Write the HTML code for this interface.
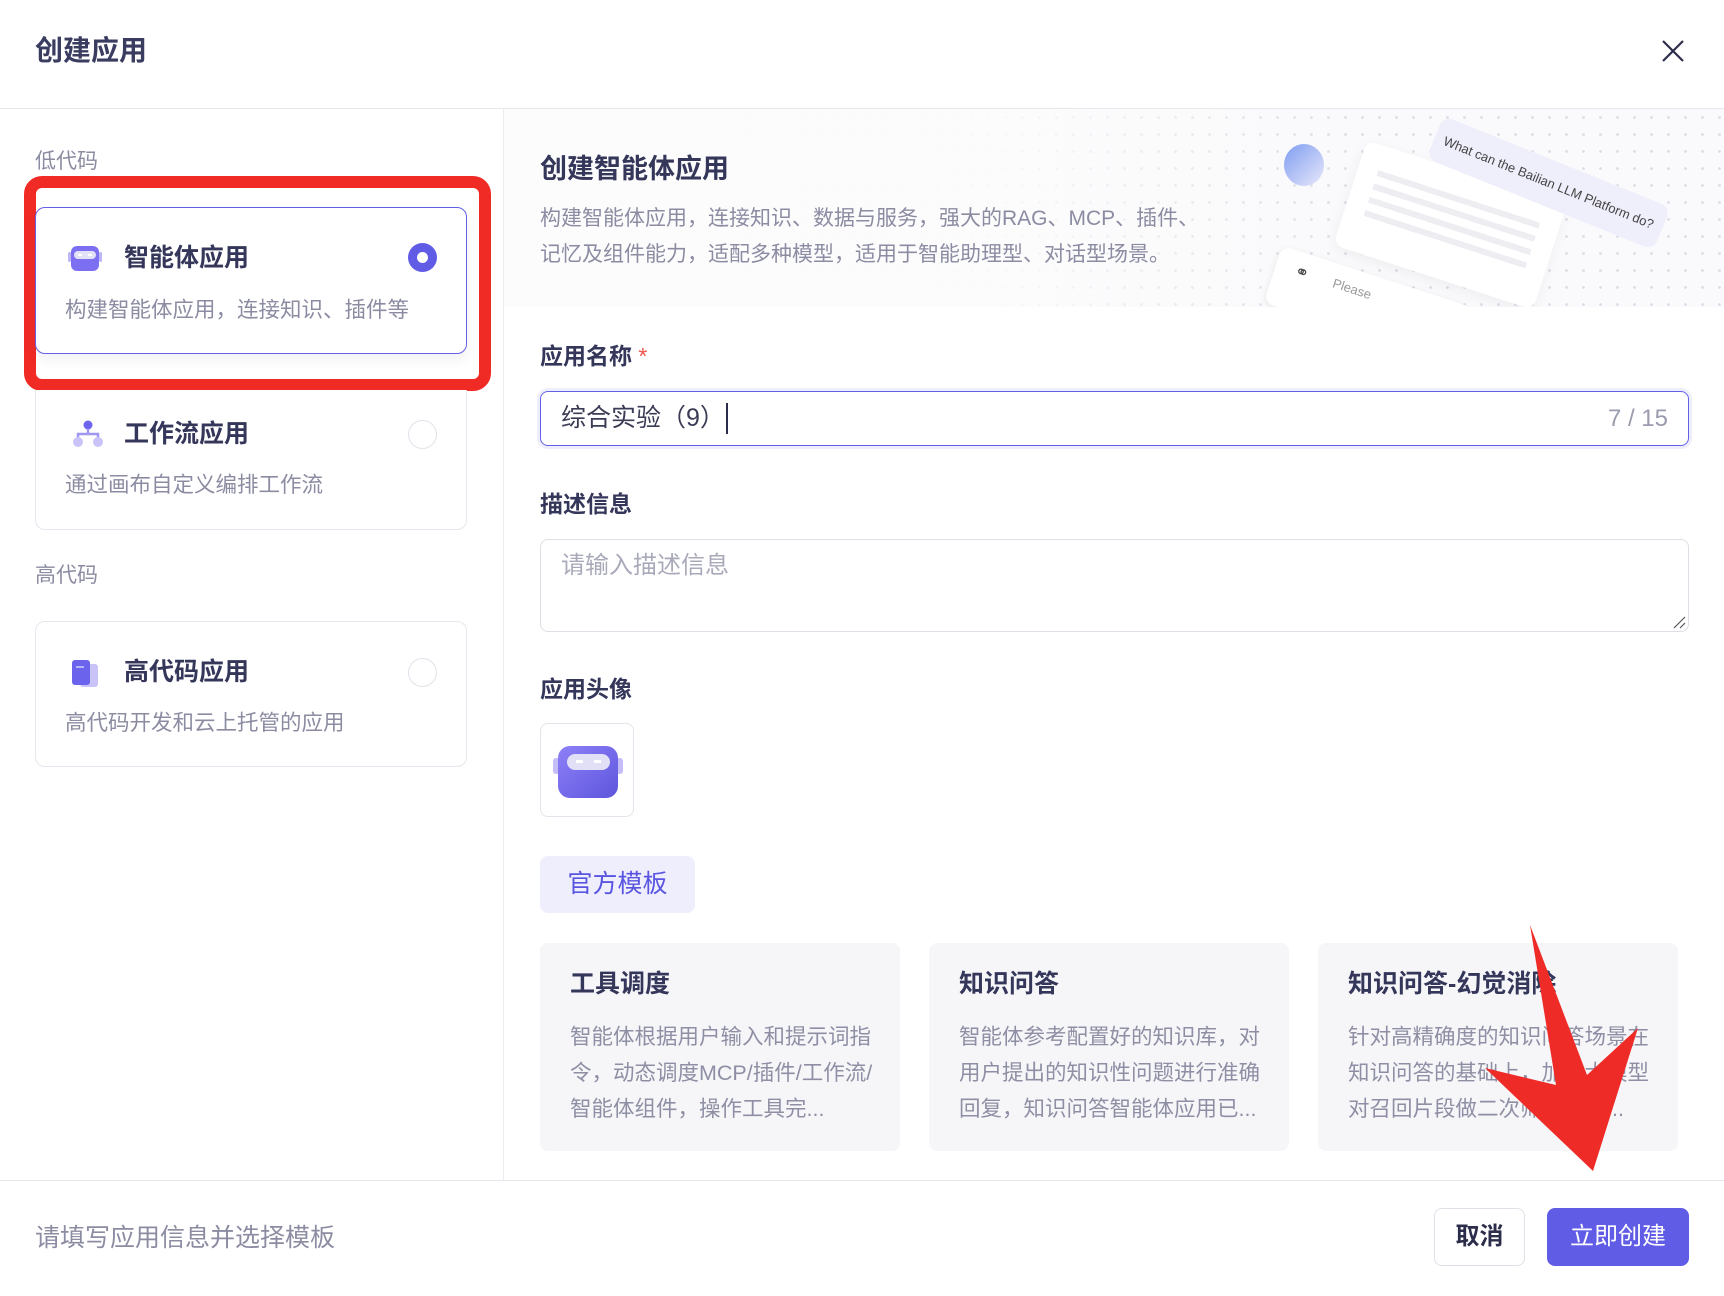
<!DOCTYPE html>
<html><head><meta charset="utf-8"><style>
*{margin:0;padding:0;box-sizing:border-box}
body{width:1724px;height:1296px;background:#fff;font-family:"Liberation Sans","Noto Sans CJK SC",sans-serif;color:#2c2d4b;position:relative;overflow:hidden}
.a{position:absolute;white-space:nowrap}
.t{line-height:1}
.card{position:absolute;border:1px solid #e6e6ee;border-radius:10px;background:#fff}
.ct{font-size:25px;font-weight:bold;color:#34365a}
.cd{font-size:21.5px;color:#8b8ca2}
.radio{position:absolute;width:29px;height:29px;border-radius:50%;border:1px solid #e2e2ea;background:#fff}
.lbl{font-size:23px;font-weight:bold;color:#34365a}
.tc{position:absolute;top:943px;width:360px;height:208px;background:#f6f6f9;border-radius:8px}
.tc .h{position:absolute;left:30px;top:29px;font-size:25px;font-weight:bold;color:#34365a}
.tc .d{position:absolute;left:30px;top:76px;font-size:21.5px;line-height:36px;color:#8e8fa4;width:306px;white-space:normal}
</style></head><body>
<div class="a t" style="left:35px;top:37px;font-size:28px;font-weight:bold;color:#3a3c60">创建应用</div>
<svg class="a" style="left:1662px;top:40px" width="22" height="22" viewBox="0 0 22 22"><path d="M1 1L21 21M21 1L1 21" stroke="#2c2d4b" stroke-width="2.2"/></svg>
<div class="a" style="left:0;top:108px;width:1724px;height:1px;background:#e6e6ec"></div>
<div class="a" style="left:503px;top:108px;width:1px;height:1072px;background:#ececf1"></div>
<div class="a t" style="left:35px;top:151px;font-size:21px;color:#8b8ca2">低代码</div>

<div class="a" style="left:24px;top:176px;width:467px;height:215px;border:12px solid #f02b26;border-radius:18px"></div>
<div class="card" style="left:35px;top:207px;width:432px;height:147px;border-color:#6460e6;box-shadow:0 6px 12px rgba(80,80,120,0.08)">
  <svg class="a" style="left:32px;top:37px" width="34" height="28" viewBox="0 0 34 28"><rect x="0" y="7" width="3" height="10" rx="1.5" fill="#bcb6f5"/><rect x="31" y="7" width="3" height="10" rx="1.5" fill="#bcb6f5"/><rect x="3" y="1" width="28" height="25" rx="6" fill="#7d6ff2"/><rect x="6" y="6" width="22" height="8" rx="4" fill="#e3e1f7"/><rect x="10" y="9" width="4" height="2" fill="#fff"/><rect x="20" y="9" width="4" height="2" fill="#fff"/></svg>
  <div class="a t ct" style="left:88px;top:38px">智能体应用</div>
  <div class="a t cd" style="left:29px;top:92px">构建智能体应用，连接知识、插件等</div>
  <div class="a" style="left:372px;top:35px;width:29px;height:29px;border-radius:50%;background:#615ce6"><div style="position:absolute;left:9px;top:9px;width:11px;height:11px;border-radius:50%;background:#fff"></div></div>
</div>
<div class="card" style="left:35px;top:390px;width:432px;height:140px;border-top:none;border-radius:0 0 10px 10px">
  <svg class="a" style="left:36px;top:30px" width="32" height="28" viewBox="0 0 32 28"><circle cx="16" cy="5" r="4.5" fill="#6f66ee"/><path d="M16 9V14M6 19V14H26V19" stroke="#9e97f3" stroke-width="2.5" fill="none"/><circle cx="6" cy="22" r="5" fill="#c8c3f8"/><circle cx="26" cy="22" r="5" fill="#c8c3f8"/></svg>
  <div class="a t ct" style="left:88px;top:32px">工作流应用</div>
  <div class="a t cd" style="left:29px;top:85px">通过画布自定义编排工作流</div>
  <div class="radio" style="left:372px;top:30px"></div>
</div>
<div class="a t" style="left:35px;top:565px;font-size:21px;color:#8b8ca2">高代码</div>
<div class="card" style="left:35px;top:621px;width:432px;height:146px">
  <svg class="a" style="left:34px;top:37px" width="30" height="30" viewBox="0 0 30 30"><rect x="10" y="5" width="18" height="23" rx="3" fill="#c8c3f8"/><rect x="2" y="1" width="18" height="25" rx="3" fill="#6c63ec"/><rect x="6" y="7" width="8" height="2" fill="#b9b4f6"/></svg>
  <div class="a t ct" style="left:88px;top:38px">高代码应用</div>
  <div class="a t cd" style="left:29px;top:91px">高代码开发和云上托管的应用</div>
  <div class="radio" style="left:372px;top:36px"></div>
</div>
<div class="a" style="left:504px;top:109px;width:1220px;height:198px;overflow:hidden">
<div class="a" style="left:0;top:0;width:1220px;height:198px;background-color:#fafafc;background-image:radial-gradient(circle,#dcdce6 1.2px,transparent 1.6px);background-size:17px 17px"></div>
<div class="a" style="left:0;top:0;width:1220px;height:198px;background:linear-gradient(90deg,#fcfcfd 0%,rgba(252,252,253,0.9) 40%,rgba(250,250,252,0) 70%)"></div>
<div class="a" style="left:780px;top:35px;width:40px;height:42px;border-radius:50%;background:linear-gradient(135deg,#7f9df0,#e8e8fb)"></div>
<div class="a" style="left:841px;top:61px;width:210px;height:110px;background:#fff;border-radius:10px;transform:rotate(18deg);box-shadow:0 4px 14px rgba(0,0,0,0.05)"><div style="margin:25px 20px;height:6px;background:#eeeef2;box-shadow:0 14px 0 #eeeef2,0 28px 0 #eeeef2,0 42px 0 #eeeef2"></div></div>
<div class="a" style="left:764px;top:166px;width:200px;height:60px;background:#fff;border-radius:10px;transform:rotate(18deg);box-shadow:0 2px 8px rgba(0,0,0,0.08)"><span style="position:absolute;left:20px;top:10px;font-size:17px;color:#444">&#9901;</span><span style="position:absolute;left:60px;top:12px;font-size:13px;color:#999">Please</span></div>
<div class="a" style="left:922px;top:51px;width:245px;height:46px;background:#efeefb;border-radius:10px;transform:rotate(22deg);font-size:13px;color:#444;line-height:46px;text-align:center">What can the Bailian LLM Platform do?</div>
</div>
<div class="a t" style="left:540px;top:156px;font-size:27px;font-weight:bold;color:#34365a">创建智能体应用</div>
<div class="a t" style="left:540px;top:208px;font-size:21px;color:#8b8ca2">构建智能体应用，连接知识、数据与服务，强大的RAG、MCP、插件、</div>
<div class="a t" style="left:540px;top:244px;font-size:21px;color:#8b8ca2">记忆及组件能力，适配多种模型，适用于智能助理型、对话型场景。</div>
<div class="a t lbl" style="left:540px;top:345px">应用名称 <span style="color:#f0524a;font-weight:normal">*</span></div>
<div class="a" style="left:540px;top:391px;width:1149px;height:55px;border:1.5px solid #6460e6;border-radius:8px;box-shadow:0 0 0 3px #eeedfc"></div>
<div class="a t" style="left:561px;top:406px;font-size:25px;color:#3a3b55">综合实验（9）</div>
<div class="a" style="left:726px;top:403px;width:2px;height:31px;background:#2c2d4b"></div>
<div class="a t" style="right:56px;top:407px;font-size:24px;color:#9a9bae">7 / 15</div>
<div class="a t lbl" style="left:540px;top:493px">描述信息</div>
<div class="a" style="left:540px;top:539px;width:1149px;height:93px;border:1px solid #dedee6;border-radius:8px"></div>
<div class="a t" style="left:561px;top:554px;font-size:24px;color:#a9aab9">请输入描述信息</div>
<svg class="a" style="left:1672px;top:615px" width="14" height="14"><path d="M2 13L13 2M8 13L13 8" stroke="#555" stroke-width="1.2"/></svg>
<div class="a t lbl" style="left:540px;top:678px">应用头像</div>
<div class="a" style="left:540px;top:723px;width:94px;height:94px;border:1px solid #e4e4ec;border-radius:8px;background:#fff">
<svg style="position:absolute;left:11px;top:20px" width="72" height="56" viewBox="0 0 72 56"><rect x="1" y="14" width="7" height="16" rx="3" fill="#c4bdf7"/><rect x="64" y="14" width="7" height="16" rx="3" fill="#c4bdf7"/><defs><linearGradient id="g" x1="0" y1="0" x2="1" y2="1"><stop offset="0" stop-color="#8e80f8"/><stop offset="1" stop-color="#5d55dc"/></linearGradient></defs><rect x="6" y="2" width="60" height="52" rx="12" fill="url(#g)"/><rect x="15" y="10" width="43" height="16" rx="8" fill="#e2e0f6"/><rect x="24" y="16" width="7" height="3" fill="#fff"/><rect x="42" y="16" width="7" height="3" fill="#fff"/></svg></div>
<div class="a t" style="left:540px;top:856px;width:155px;height:57px;background:#efeefd;border-radius:8px;font-size:25px;color:#5a55e0;line-height:57px;text-align:center">官方模板</div>
<div class="tc" style="left:540px"><div class="h t">工具调度</div><div class="d">智能体根据用户输入和提示词指令，动态调度MCP/插件/工作流/智能体组件，操作工具完...</div></div>
<div class="tc" style="left:929px"><div class="h t">知识问答</div><div class="d">智能体参考配置好的知识库，对用户提出的知识性问题进行准确回复，知识问答智能体应用已...</div></div>
<div class="tc" style="left:1318px"><div class="h t">知识问答-幻觉消除</div><div class="d">针对高精确度的知识问答场景在知识问答的基础上，加入大模型对召回片段做二次筛选条件...</div></div>
<div class="a" style="left:0;top:1180px;width:1724px;height:1px;background:#e6e6ec"></div>
<div class="a t" style="left:35px;top:1226px;font-size:25px;color:#8b8ca2">请填写应用信息并选择模板</div>
<div class="a" style="left:1434px;top:1208px;width:91px;height:58px;border:1px solid #e0e0e8;border-radius:8px;font-size:24px;font-weight:bold;line-height:56px;text-align:center;color:#2c2d4b">取消</div>
<div class="a" style="left:1547px;top:1208px;width:142px;height:58px;background:#615ce6;border-radius:8px;font-size:24px;line-height:58px;text-align:center;color:#fff">立即创建</div>
<svg class="a" style="left:0;top:0" width="1724" height="1296"><polygon points="1530,925 1556,1085 1485,1068 1593,1171 1638,1028 1587,1075" fill="#ef2b27"/></svg>
</body></html>
